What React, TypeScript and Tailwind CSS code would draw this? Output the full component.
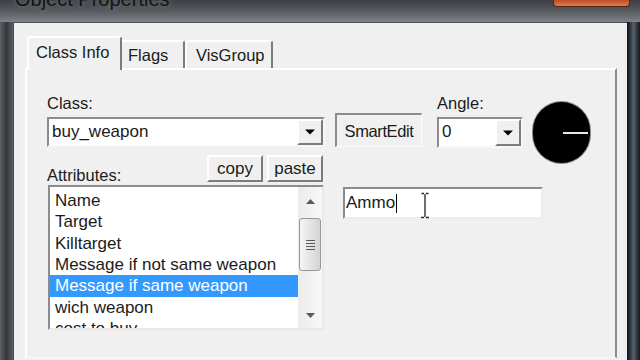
import React from 'react';

const attributes = [
  'Name',
  'Target',
  'Killtarget',
  'Message if not same weapon',
  'Message if same weapon',
  'wich weapon',
  'cost to buy',
];

const SELECTED = 4;

function DropArrow() {
  return (
    <svg width="10" height="6" viewBox="0 0 10 6">
      <path d="M0 0.5h10L5 5.5z" fill="#000" />
    </svg>
  );
}

function ComboBox({ value, width, height }: { value: string; width: string; height: string }) {
  return (
    <div
      className={`${width} ${height} flex bg-white border-2 border-t-[#8c8c8c] border-l-[#8c8c8c] border-r-[#f6f6f6] border-b-[#f6f6f6]`}
    >
      <div className="flex-1 pl-[3px] text-[17px] leading-[26px] text-[#1b1b1b] truncate">{value}</div>
      <div className="w-[26px] h-full flex items-center justify-center bg-[#f0f0f0] border-t-2 border-l-2 border-t-white border-l-white border-b-2 border-r-2 border-b-[#7c7c7c] border-r-[#7c7c7c]">
        <DropArrow />
      </div>
    </div>
  );
}

function ScrollArrow({ up }: { up?: boolean }) {
  return (
    <svg width="9" height="5" viewBox="0 0 9 5">
      <path d={up ? 'M0 5h9L4.5 0z' : 'M0 0h9L4.5 5z'} fill="#5a5a5a" />
    </svg>
  );
}

function AttributeList() {
  return (
    <div className="ml-[1px] w-[276px] h-[145px] flex bg-white border-2 border-t-[#8c8c8c] border-l-[#8c8c8c] border-r-[#e9e9e9] border-b-[#e9e9e9] overflow-hidden">
      <div className="flex-1 pt-[3px] overflow-hidden">
        {attributes.map((a, i) => (
          <div
            key={a}
            className={`h-[21.33px] pl-[5px] text-[17px] leading-[21.33px] whitespace-nowrap ${
              i === SELECTED ? 'bg-[#3399ff] text-white' : 'text-[#1b1b1b]'
            }`}
          >
            {a}
          </div>
        ))}
      </div>
      {/* scrollbar */}
      <div className="w-[24px] h-full flex flex-col items-center bg-linear-to-r from-[#ececec] to-[#f7f7f7] pt-[12px] pb-[10px]">
        <ScrollArrow up />
        <div className="mt-[14px] w-[22px] h-[53px] rounded-[3px] border border-[#979797] bg-linear-to-r from-[#f6f6f6] to-[#d3d3d3] flex flex-col items-center justify-center gap-[2px]">
          <div className="w-[9px] h-[1px] bg-[#5a5a5a]" />
          <div className="w-[9px] h-[1px] bg-[#5a5a5a]" />
          <div className="w-[9px] h-[1px] bg-[#5a5a5a]" />
          <div className="w-[9px] h-[1px] bg-[#5a5a5a]" />
        </div>
        <div className="flex-1" />
        <ScrollArrow />
      </div>
    </div>
  );
}

function RaisedButton({ label, width, height }: { label: string; width: string; height: string }) {
  return (
    <div
      className={`${width} ${height} flex items-center justify-center bg-[#f0f0f0] border-t-2 border-l-2 border-t-white border-l-white border-b-2 border-r-2 border-b-[#7c7c7c] border-r-[#7c7c7c] text-[17px] leading-[20px] text-[#1b1b1b]`}
    >
      {label}
    </div>
  );
}

function AngleDial() {
  return (
    <div className="relative w-[57px] h-[61px] rounded-full bg-black shadow-[0_0_0_1px_#8a8a8a]">
      <div className="absolute left-[30px] right-[2px] top-[30px] h-[2px] bg-[#e8e8e8]" />
    </div>
  );
}

function IBeam() {
  return (
    <svg className="absolute left-[75px] top-[3px]" width="10" height="28" viewBox="0 0 10 28">
      <path d="M1.5 1.5h2.5M6 1.5h2.5M5 2v23M1 25.5h3M6 25.5h3" stroke="#fff" strokeWidth="3" fill="none" />
      <path d="M1.5 1.5h2.5M6 1.5h2.5M5 2v23M1 25.5h3M6 25.5h3" stroke="#222" strokeWidth="1.3" fill="none" />
    </svg>
  );
}

export default function App() {
  return (
    <div className="w-[640px] h-[360px] overflow-hidden flex flex-col bg-[#2a2d32] font-['Liberation_Sans',Arial,sans-serif]">
      {/* title bar */}
      <div className="h-[22px] shrink-0 flex items-start justify-between pl-[15px] pr-[10px] bg-linear-to-b from-[#3c3f44] via-[#575a5f] to-[#7f8286]">
        <div className="-mt-[12px] text-[20px] leading-[22px] text-[#141414] [text-shadow:0_0_6px_rgba(255,255,255,0.3)]">
          Object Properties
        </div>
        <div className="w-[77px] h-[7px] rounded-b-[4px] border border-t-0 border-[#5a2412] bg-linear-to-b from-[#b9502a] to-[#e07a4c]" />
      </div>

      <div className="flex-1 flex">
        {/* left frame */}
        <div className="w-[13px] bg-linear-to-r from-[#5e6166] via-[#34373c] to-[#5a5d61]" />

        {/* client area */}
        <div className="flex-1 flex flex-col border-t border-l border-[#4b4e53] bg-[#f0f0f0] pt-[13px] pl-[11px]">
          {/* tabs */}
          <div className="h-[32px] flex items-end pl-[2px] text-[16.5px] text-[#1b1b1b]">
            <div className="relative z-10 w-[95px] h-[34px] -mb-[2px] bg-[#f0f0f0] rounded-t-[3px] border-t-2 border-l-2 border-t-white border-l-white border-r-2 border-r-[#7c7c7c] pl-[7px] pt-[4px] leading-[20px]">
              Class Info
            </div>
            <div className="w-[63px] h-[28px] bg-[#f0f0f0] rounded-tr-[3px] border-t-2 border-t-white border-r-2 border-r-[#7c7c7c] pl-[6px] pt-[3px] leading-[20px]">
              Flags
            </div>
            <div className="w-[88px] h-[28px] bg-[#f0f0f0] rounded-t-[3px] border-t-2 border-l-2 border-t-white border-l-white border-r-2 border-r-[#7c7c7c] pl-[9px] pt-[3px] leading-[20px]">
              VisGroup
            </div>
          </div>

          {/* tab panel */}
          <div className="w-[592px] h-[290px] flex border-t-2 border-l-2 border-t-white border-l-white border-r-2 border-r-[#8c8c8c] border-b border-b-[#fafafa] pl-[20px] pt-[23px] text-[#1b1b1b]">
            {/* left column */}
            <div className="w-[278px] flex flex-col">
              <div className="h-[20px] text-[16.5px] leading-[20px]">Class:</div>
              <div className="mt-[4px]">
                <ComboBox value="buy_weapon" width="w-[278px]" height="h-[30px]" />
              </div>
              <div className="mt-[8px] h-[27px] flex items-start">
                <div className="mt-[10px] text-[16.5px] leading-[20px]">Attributes:</div>
                <div className="ml-auto mr-[2px] flex gap-[4px]">
                  <RaisedButton label="copy" width="w-[56px]" height="h-[27px]" />
                  <RaisedButton label="paste" width="w-[56px]" height="h-[27px]" />
                </div>
              </div>
              <div className="mt-[3px]">
                <AttributeList />
              </div>
            </div>

            {/* right column */}
            <div className="ml-[10px] flex flex-col">
              <div className="h-[70px] flex items-start">
                <div className="mt-[20px] w-[87px] h-[34px] flex items-center justify-center bg-[#f0f0f0] border-t-2 border-l-2 border-t-[#8c8c8c] border-l-[#8c8c8c] border-b border-r border-b-[#fbfbfb] border-r-[#fbfbfb] text-[16.5px] leading-[20px] tracking-[-0.4px]">
                  SmartEdit
                </div>
                <div className="ml-[15px] w-[86px] flex flex-col">
                  <div className="h-[20px] text-[16.5px] leading-[20px]">Angle:</div>
                  <div className="mt-[4px]">
                    <ComboBox value="0" width="w-[86px]" height="h-[31px]" />
                  </div>
                </div>
                <div className="ml-[10px] mt-[9px]">
                  <AngleDial />
                </div>
              </div>

              <div className="relative mt-[24px] ml-[8px] w-[200px] h-[32px] flex items-center bg-white border-2 border-t-[#8c8c8c] border-l-[#8c8c8c] border-r-[#ededed] border-b-[#ededed] pl-[1px]">
                <span className="text-[17px] leading-[22px] text-[#1b1b1b]">Ammo</span>
                <span className="ml-[1px] w-[1px] h-[19px] bg-black" />
                <IBeam />
              </div>
            </div>
          </div>
        </div>

        {/* right frame */}
        <div className="w-[13px] bg-linear-to-r from-[#0f1216] via-[#56606b] to-[#14171b]" />
      </div>
    </div>
  );
}
